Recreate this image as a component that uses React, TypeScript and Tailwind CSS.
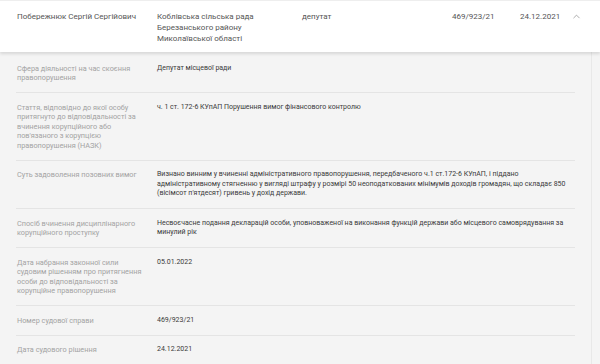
import { ChevronUp } from "lucide-react";

const rows: { label: string; value: string }[] = [
  {
    label: "Сфера діяльності на час скоєння правопорушення",
    value: "Депутат місцевої ради",
  },
  {
    label:
      "Стаття, відповідно до якої особу притягнуто до відповідальності за вчинення корупційного або пов'язаного з корупцією правопорушення (НАЗК)",
    value: "ч. 1 ст. 172-6 КУпАП Порушення вимог фінансового контролю",
  },
  {
    label: "Суть задоволення позовних вимог",
    value:
      "Визнано винним у вчиненні адміністративного правопорушення, передбаченого ч.1 ст.172-6 КУпАП, і піддано адміністративному стягненню у вигляді штрафу у розмірі 50 неоподаткованих мінімумів доходів громадян, що складає 850 (вісімсот п'ятдесят) гривень у дохід держави.",
  },
  {
    label: "Спосіб вчинення дисциплінарного корупційного проступку",
    value:
      "Несвоєчасне подання декларацій особи, уповноваженої на виконання функцій держави або місцевого самоврядування за минулий рік",
  },
  {
    label:
      "Дата набрання законної сили судовим рішенням про притягнення особи до відповідальності за корупційне правопорушення",
    value: "05.01.2022",
  },
  { label: "Номер судової справи", value: "469/923/21" },
  { label: "Дата судового рішення", value: "24.12.2021" },
];

export default function App() {
  return (
    <div className="w-[600px] h-[364px] overflow-hidden bg-[#f4f4f4] font-['Roboto',sans-serif]">
      {/* summary row */}
      <div className="relative z-10 flex h-[52px] items-start bg-white pt-[10px] text-[8px] leading-[11px] text-[#555] shadow-[0_2px_3px_rgba(0,0,0,0.12)] border-t border-[#eee]">
        <div className="w-[157px] shrink-0 pl-[17px]">Побережнюк Сергій Сергійович</div>
        <div className="w-[145px] shrink-0">
          Коблівська сільська рада
          <br />
          Березанського району
          <br />
          Миколаївської області
        </div>
        <div className="w-[150px] shrink-0">депутат</div>
        <div className="w-[68px] shrink-0">469/923/21</div>
        <div className="w-[51px] shrink-0">24.12.2021</div>
        <ChevronUp size={11} strokeWidth={1.5} className="text-[#888]" />
      </div>

      {/* details */}
      <div className="mr-[8px] border-r border-[#e8e8e8] px-4 pt-[2px]">
        {rows.map((r, i) => (
          <div
            key={i}
            className="flex border-b border-[#e4e4e4] py-[9.5px] text-[7px] leading-[9.5px]"
          >
            <div className="w-[141px] shrink-0 pl-[1px] pr-[14px] text-[7.3px] text-[#a3a3a3]">
              {r.label}
            </div>
            <div className="flex-1 pr-[6px] text-[#3a3a3a]">{r.value}</div>
          </div>
        ))}
      </div>
    </div>
  );
}
